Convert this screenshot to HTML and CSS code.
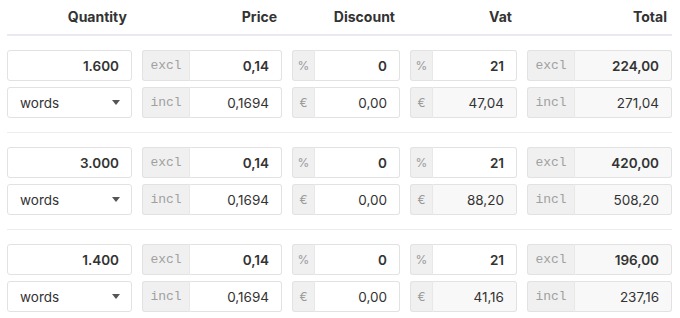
FILE: index.html
```html
<!DOCTYPE html>
<html>
<head>
<meta charset="utf-8">
<link rel="stylesheet" href="styles.css">
</head>
<body>
<div class="table">
  <div class="head grid">
    <div class="th">Quantity</div>
    <div class="th">Price</div>
    <div class="th">Discount</div>
    <div class="th">Vat</div>
    <div class="th">Total</div>
  </div>

  <div class="section">
    <div class="grid">
      <div class="field strong">1.600</div>
      <div class="group"><span class="addon mono">excl</span><span class="field strong">0,14</span></div>
      <div class="group"><span class="addon">%</span><span class="field strong">0</span></div>
      <div class="group"><span class="addon">%</span><span class="field strong">21</span></div>
      <div class="group"><span class="addon mono">excl</span><span class="field strong ro">224,00</span></div>
    </div>
    <div class="grid">
      <div class="field select">words<svg class="caret" width="8" height="5" viewBox="0 0 8 5"><path d="M0 0H8L4 5Z" fill="#555"/></svg></div>
      <div class="group"><span class="addon mono">incl</span><span class="field">0,1694</span></div>
      <div class="group"><span class="addon">€</span><span class="field">0,00</span></div>
      <div class="group"><span class="addon">€</span><span class="field ro">47,04</span></div>
      <div class="group"><span class="addon mono">incl</span><span class="field ro">271,04</span></div>
    </div>
  </div>

  <div class="section">
    <div class="grid">
      <div class="field strong">3.000</div>
      <div class="group"><span class="addon mono">excl</span><span class="field strong">0,14</span></div>
      <div class="group"><span class="addon">%</span><span class="field strong">0</span></div>
      <div class="group"><span class="addon">%</span><span class="field strong">21</span></div>
      <div class="group"><span class="addon mono">excl</span><span class="field strong ro">420,00</span></div>
    </div>
    <div class="grid">
      <div class="field select">words<svg class="caret" width="8" height="5" viewBox="0 0 8 5"><path d="M0 0H8L4 5Z" fill="#555"/></svg></div>
      <div class="group"><span class="addon mono">incl</span><span class="field">0,1694</span></div>
      <div class="group"><span class="addon">€</span><span class="field">0,00</span></div>
      <div class="group"><span class="addon">€</span><span class="field ro">88,20</span></div>
      <div class="group"><span class="addon mono">incl</span><span class="field ro">508,20</span></div>
    </div>
  </div>

  <div class="section">
    <div class="grid">
      <div class="field strong">1.400</div>
      <div class="group"><span class="addon mono">excl</span><span class="field strong">0,14</span></div>
      <div class="group"><span class="addon">%</span><span class="field strong">0</span></div>
      <div class="group"><span class="addon">%</span><span class="field strong">21</span></div>
      <div class="group"><span class="addon mono">excl</span><span class="field strong ro">196,00</span></div>
    </div>
    <div class="grid">
      <div class="field select">words<svg class="caret" width="8" height="5" viewBox="0 0 8 5"><path d="M0 0H8L4 5Z" fill="#555"/></svg></div>
      <div class="group"><span class="addon mono">incl</span><span class="field">0,1694</span></div>
      <div class="group"><span class="addon">€</span><span class="field">0,00</span></div>
      <div class="group"><span class="addon">€</span><span class="field ro">41,16</span></div>
      <div class="group"><span class="addon mono">incl</span><span class="field ro">237,16</span></div>
    </div>
  </div>
</div>
</body>
</html>
```

FILE: styles.css
```css
* { box-sizing: border-box; }
body {
  margin: 0;
  background: #fff;
  font-family: "Inter", "Lato", sans-serif;
  font-size: 13.5px;
  color: #333;
}
.table {
  padding: 0 8px 0 7px;
}
.grid {
  display: grid;
  grid-template-columns: 125px 140px 108px 107px 145px;
  column-gap: 10px;
}
.head {
  height: 36px;
  align-items: center;
  border-bottom: 2px solid #e9e9f3;
  padding-bottom: 2px;
}
.th {
  text-align: right;
  padding-right: 5px;
  font-weight: 700;
  font-size: 14px;
  color: #333;
}
.section {
  padding: 14px 0;
  display: flex;
  flex-direction: column;
  gap: 6px;
  border-bottom: 1px solid #ececf3;
}
.section:last-child { border-bottom: none; }
.field {
  height: 31px;
  border: 1px solid #e2e2e2;
  border-radius: 3px;
  background: #fff;
  display: flex;
  align-items: center;
  justify-content: flex-end;
  padding: 0 12px;
  color: #333;
}
.strong { font-weight: 600; }
.select {
  justify-content: space-between;
  padding: 0 10px 0 12px;
}
.caret { margin-right: 1px; }
.group {
  display: flex;
  height: 31px;
}
.group .field {
  flex: 1;
  border-radius: 0 3px 3px 0;
  border-left: none;
}
.addon {
  display: flex;
  align-items: center;
  justify-content: center;
  background: #f0f0f0;
  border: 1px solid #e2e2e2;
  border-right: 1px solid #e8e8e8;
  border-radius: 3px 0 0 3px;
  color: #9a9a9a;
  width: 23px;
  font-size: 12px;
}
.addon.mono {
  width: 48px;
  font-family: "Liberation Mono", monospace;
  font-size: 13px;
  color: #a0a0a0;
}
.field.ro { background: #f8f8f8; }
```
